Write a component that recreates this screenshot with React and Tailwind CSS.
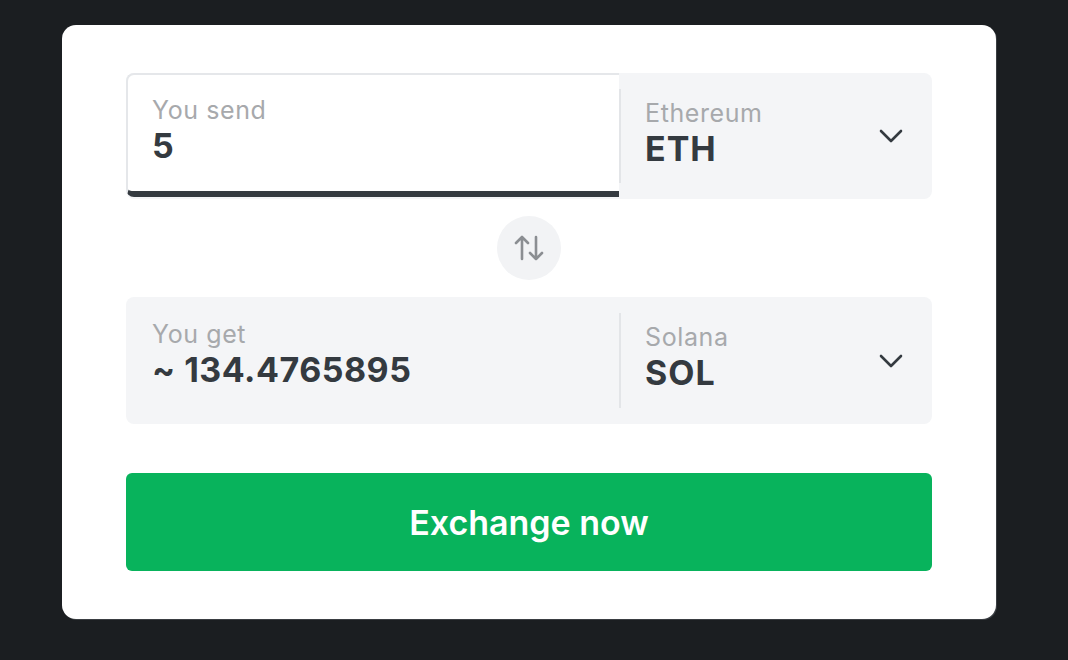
function SelectSide({ name, ticker }) {
  return (
    <div className="relative flex w-[313px] items-center self-stretch pl-[26px]">
      <div className="absolute left-0 top-4 bottom-4 w-[2px] bg-[#e3e5e8]" />
      <div className="flex flex-1 flex-col pb-[5px]">
        <span className="text-[25px] leading-[30px] tracking-[0.6px] text-[#a7a9ac]">{name}</span>
        <span className="text-[34px] font-bold leading-[42px] tracking-[1px] text-[#343a40]">{ticker}</span>
      </div>
      <svg width="24" height="14" viewBox="0 0 24 14" className="mr-[29px]" fill="none">
        <path d="M2 2l10 10L22 2" stroke="#343a40" strokeWidth="2.6" strokeLinecap="round" strokeLinejoin="round" />
      </svg>
    </div>
  );
}

export default function App() {
  return (
    <div className="min-h-[660px] bg-[#1b1e21] pt-[25px] pl-[62px]" style={{ fontFamily: 'Inter, "Liberation Sans", sans-serif' }}>
      <div className="w-[934px] rounded-[14px] bg-white px-[64px] pt-[48px] pb-[48px] shadow-[1px_1px_0_#3a3e42]">
        <div className="flex h-[126px] items-start rounded-lg bg-[#f4f5f7]">
          <div className="flex h-[124px] flex-1 flex-col rounded-l-lg border-2 border-r-0 border-b-[6px] border-[#e5e7ea] border-b-[#343a40] bg-white pl-6 pt-5">
            <span className="text-[25px] leading-[30px] tracking-[0.6px] text-[#a7a9ac]">You send</span>
            <span className="text-[34px] font-bold leading-[42px] tracking-[0.5px] text-[#343a40]">5</span>
          </div>
          <SelectSide name="Ethereum" ticker="ETH" />
        </div>

        <div className="flex justify-center py-[17px]">
          <div className="flex h-16 w-16 items-center justify-center rounded-full bg-[#f2f3f5]">
            <svg width="32" height="28" viewBox="0 0 32 28" fill="none" stroke="#8b8e92" strokeWidth="2.6" strokeLinecap="round" strokeLinejoin="round">
              <path d="M9 25V3M3 9l6-6 6 6" />
              <path d="M23 3v22M17 19l6 6 6-6" />
            </svg>
          </div>
        </div>

        <div className="flex h-[127px] rounded-lg bg-[#f4f5f7]">
          <div className="flex flex-1 flex-col pl-[26px] pt-[22px]">
            <span className="text-[25px] leading-[30px] tracking-[0.6px] text-[#a7a9ac]">You get</span>
            <span className="text-[34px] font-bold leading-[42px] tracking-[0.5px] text-[#343a40]">~ 134.4765895</span>
          </div>
          <SelectSide name="Solana" ticker="SOL" />
        </div>

        <button className="mt-[49px] flex h-[98px] w-full items-center justify-center rounded-md bg-[#08b35c] text-[34px] font-semibold text-white">
          Exchange now
        </button>
      </div>
    </div>
  );
}
